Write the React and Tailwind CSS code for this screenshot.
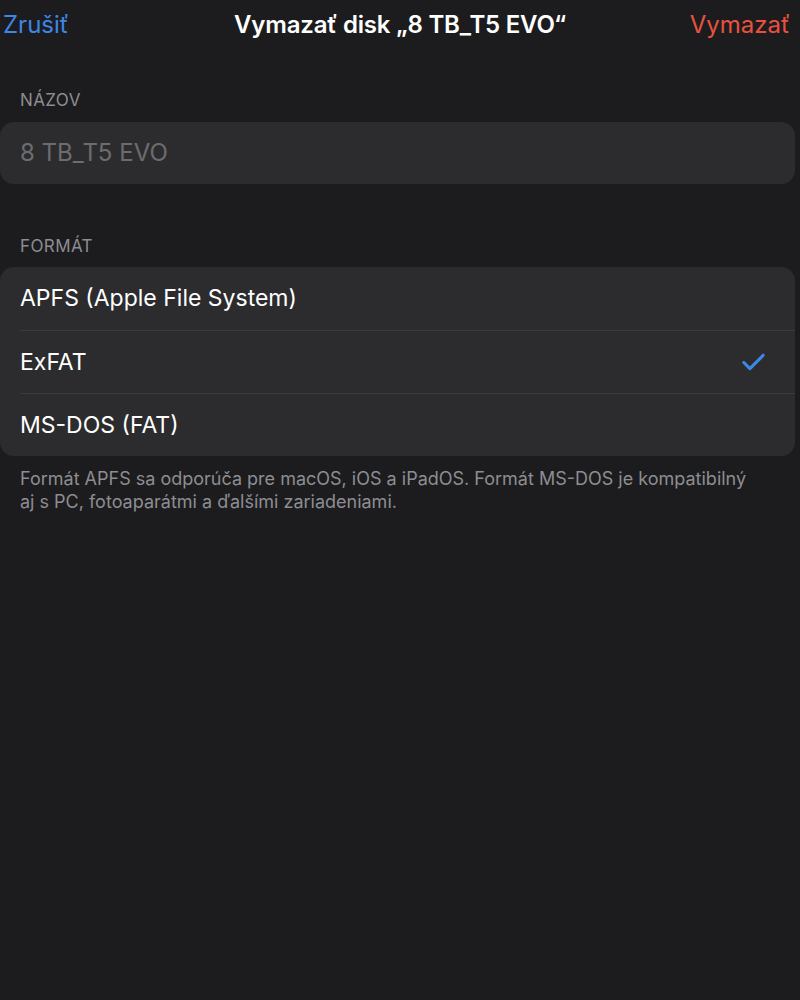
import { Check } from "lucide-react";

const FORMATS = [
  { label: "APFS (Apple File System)", selected: false },
  { label: "ExFAT", selected: true },
  { label: "MS-DOS (FAT)", selected: false },
];

export default function App() {
  return (
    <div
      className="w-[800px] h-[1000px] bg-[#1c1c1e] overflow-hidden"
      style={{ fontFamily: "Inter, 'Noto Sans', sans-serif" }}
    >
      {/* nav bar */}
      <div className="relative h-[50px] flex items-center justify-between pl-[3px] pr-[10px]">
        <button className="text-[24px] text-[#3d86e6]">Zrušiť</button>
        <h1 className="absolute left-0 right-0 text-center text-white text-[24px] font-semibold tracking-[-0.2px] pointer-events-none">
          Vymazať disk „8 TB_T5 EVO“
        </h1>
        <button className="text-[24px] text-[#e8513f]">Vymazať</button>
      </div>

      {/* name */}
      <div className="pt-[40px]">
        <p className="px-5 text-[17px] text-[#8d8d92] uppercase tracking-[0.4px] leading-[20px]">Názov</p>
        <div className="mt-[12px] mr-[5px] h-[62px] rounded-[14px] bg-[#2c2c2e] flex items-center px-5">
          <span className="text-[24px] text-[#6c6c70]">8 TB_T5 EVO</span>
        </div>
      </div>

      {/* format */}
      <div className="pt-[52px]">
        <p className="px-5 text-[17px] text-[#8d8d92] uppercase tracking-[0.4px] leading-[20px]">Formát</p>
        <div className="mt-[11px] mr-[5px] rounded-[14px] bg-[#2c2c2e] overflow-hidden">
          {FORMATS.map((f, i) => (
            <div key={f.label} className="pl-5">
              <div
                className={`h-[63px] flex items-center justify-between pr-[27px] ${
                  i > 0 ? "border-t border-[#3a3a3c]" : ""
                }`}
              >
                <span className="text-[23px] text-white">{f.label}</span>
                {f.selected && <Check size={29} strokeWidth={2.6} className="text-[#3d86e6]" />}
              </div>
            </div>
          ))}
        </div>
        <p className="px-5 pt-[11px] text-[18px] leading-[23px] text-[#8d8d92]">
          Formát APFS sa odporúča pre macOS, iOS a iPadOS. Formát MS-DOS je kompatibilný
          <br />
          aj s PC, fotoaparátmi a ďalšími zariadeniami.
        </p>
      </div>
    </div>
  );
}
